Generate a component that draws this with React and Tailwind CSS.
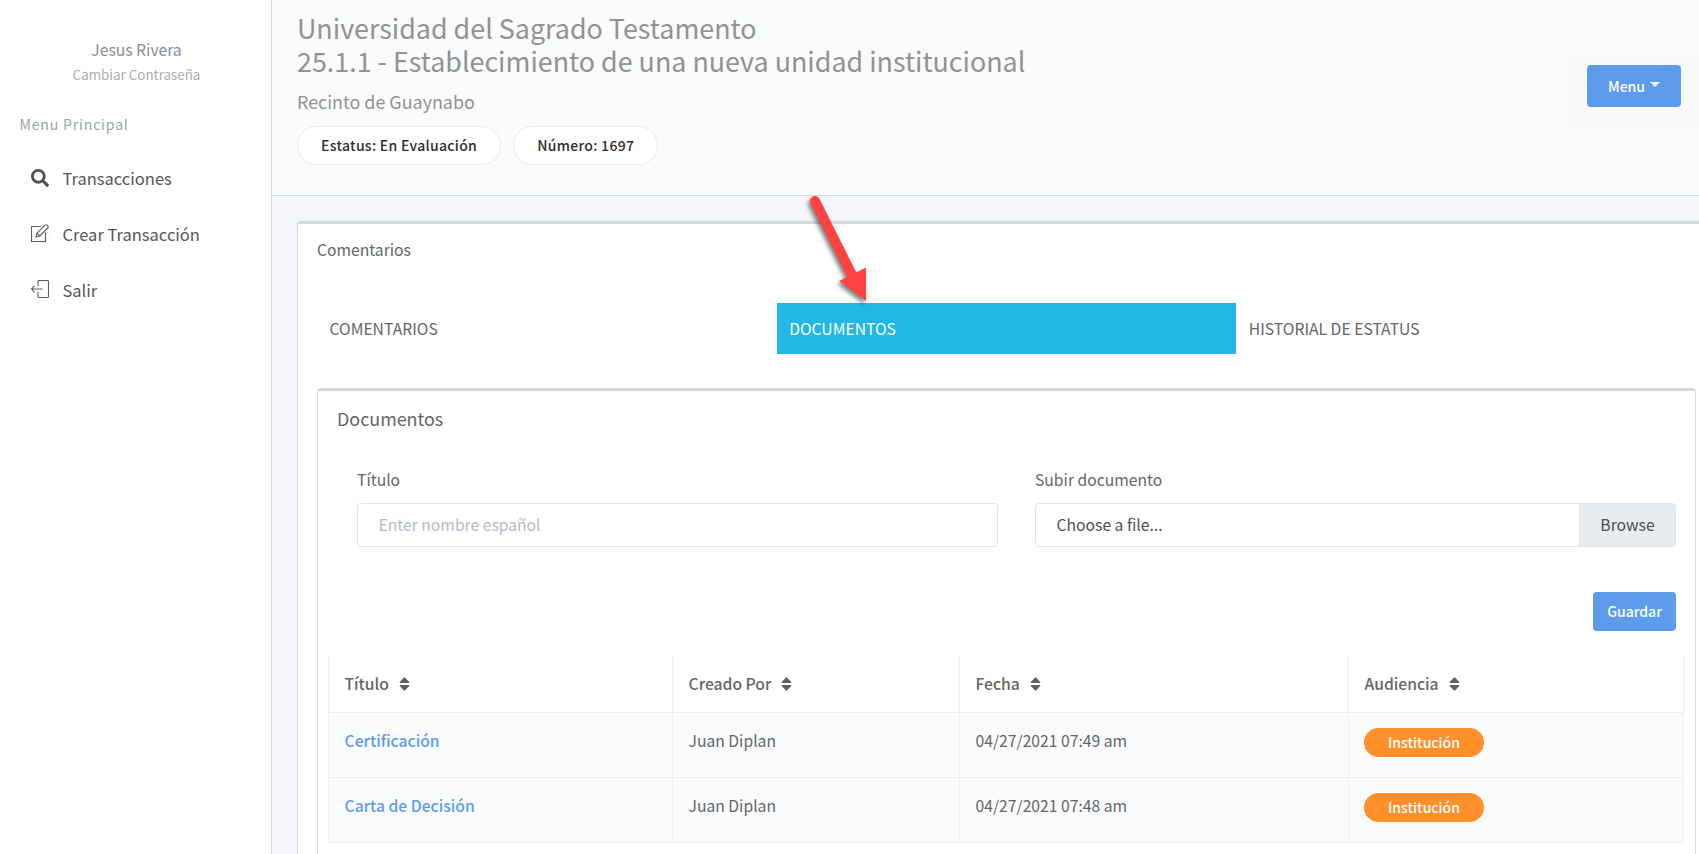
import { FaSearch } from 'react-icons/fa'

const documents = [
  { title: 'Certificación', author: 'Juan Diplan', date: '04/27/2021 07:49 am', audience: 'Institución' },
  { title: 'Carta de Decisión', author: 'Juan Diplan', date: '04/27/2021 07:48 am', audience: 'Institución' },
]

const columns = ['Título', 'Creado Por', 'Fecha', 'Audiencia']

function EditIcon() {
  return (
    <svg className="w-[20px] h-[20px]" viewBox="0 0 20 20" fill="none" stroke="#5c5c5c" strokeWidth="1.1" strokeLinejoin="round">
      <path d="M11 2.5H1.5v15h14V8.5" />
      <path d="M6 13l1-3.8L15 1.2q1.2-1 2.5.2t.3 2.6L9.8 12z" />
      <path d="M7 9.2L9.8 12" />
    </svg>
  )
}

function ExitIcon() {
  return (
    <svg className="w-[20px] h-[20px]" viewBox="0 0 20 20" fill="none" stroke="#5c5c5c" strokeWidth="1.1" strokeLinejoin="round">
      <path d="M8 6V1.5q0-1 1-1h8.500q1 0 1 1v15q0 1-1 1H9q-1 0-1-1V12" />
      <path d="M12.5 9H1.500M4.500 5.700L1.500 9l3 3.300" />
    </svg>
  )
}

function SortIcon() {
  return (
    <svg className="w-[11px] h-[14px] -mt-px" viewBox="0 0 11 14" fill="#616161">
      <path d="M5.5 0l4.800 5q.4.900-.6.900H1.300q-1 0-.6-.900z" />
      <path d="M5.5 14l4.800-5q.4-1-.6-1H1.300q-1 0-.6 1z" />
    </svg>
  )
}

function NavItem({ icon, label }) {
  return (
    <a className="flex items-center h-[56px] pl-[30px] text-[16.5px]">
      <span className="w-[32.5px]">{icon}</span>
      {label}
    </a>
  )
}

function Sidebar() {
  return (
    <aside className="w-[272px] shrink-0 bg-white border-r border-[#d2d9dd] text-[#565656]">
      <div className="pt-[38px] pl-[2px] text-center">
        <div className="text-[15.7px] leading-[24px] text-[#878c9b]">Jesus Rivera</div>
        <div className="text-[13.4px] leading-[24px] text-[#adadad]">Cambiar Contraseña</div>
      </div>
      <div className="mt-[26px] mb-[14px] pl-[19.5px] text-[14px] leading-6 tracking-[0.85px] text-[#98a6ad]">
        Menu Principal
      </div>
      <NavItem icon={<FaSearch className="ml-[1px]" size={18} color="#505050" />} label="Transacciones" />
      <NavItem icon={<EditIcon />} label="Crear Transacción" />
      <NavItem icon={<ExitIcon />} label="Salir" />
    </aside>
  )
}

function Pill({ children }) {
  return (
    <span className="h-[39px] px-[23px] flex items-center rounded-full border border-[#e8eaeb] bg-white text-[14px] font-medium tracking-[0.3px] text-[#2d2d2d]">
      {children}
    </span>
  )
}

function Header() {
  return (
    <header className="h-[196px] flex justify-between bg-[#fafbfd] border-b border-[#cfd9e0] pl-[25px]">
      <div className="pt-[11px] text-[#929292]">
        <h1 className="text-[26.87px] leading-[33px]">
          Universidad del Sagrado Testamento
          <br />
          25.1.1 - Establecimiento de una nueva unidad institucional
        </h1>
        <h2 className="mt-[12px] text-[17.9px] leading-[24px]">Recinto de Guaynabo</h2>
        <div className="mt-[13px] flex gap-[12px]">
          <Pill>Estatus: En Evaluación</Pill>
          <Pill>Número: 1697</Pill>
        </div>
      </div>
      <div className="mt-[53px] w-[138px] h-[76px] pt-[12px] pl-[26px] bg-[#fafafa]">
        <button className="w-[94px] h-[42px] flex items-center justify-center gap-[5px] rounded bg-[#5d9cec] text-[14px] font-medium text-white">
          Menu
          <span className="-mt-[3px] border-x-[5px] border-t-[5px] border-x-transparent border-t-white" />
        </button>
      </div>
    </header>
  )
}

function Arrow() {
  return (
    <svg className="absolute left-[800px] top-[190px] w-[80px] h-[125px] drop-shadow-[-2px_3px_2px_rgba(0,0,0,0.5)]" viewBox="800 190 80 125">
      <path d="M815 201L853 277" stroke="#ff4343" strokeWidth="10" strokeLinecap="round" />
      <path d="M866 267.5V301L839.3 281z" fill="#ff4343" />
    </svg>
  )
}

function Tabs() {
  return (
    <div className="grid grid-cols-3 h-[51px] text-[15.7px]">
      <div className="flex items-center pl-[12.5px]">COMENTARIOS</div>
      <div className="flex items-center pl-[12.5px] bg-[#23b7e5] text-white">DOCUMENTOS</div>
      <div className="flex items-center pl-[12.5px]">HISTORIAL DE ESTATUS</div>
    </div>
  )
}

function UploadForm() {
  return (
    <div className="mt-[38px] px-[19px]">
      <div className="flex justify-between pl-[20px]">
        <div className="w-[641px]">
          <label className="block h-[35px] text-[15.7px] leading-[24px]">Título</label>
          <div className="h-[44px] flex items-center rounded border border-[#dde6e9] px-[20.5px] pb-px text-[15.7px] text-[#b7bac9]">
            Enter nombre español
          </div>
        </div>
        <div className="w-[641px]">
          <label className="block h-[35px] text-[15.7px] leading-[24px]">Subir documento</label>
          <div className="h-[44px] flex items-stretch overflow-hidden rounded border border-[#dde6e9] text-[15.7px] text-[#495057]">
            <span className="flex-1 flex items-center px-[20.5px] pb-px">Choose a file...</span>
            <span className="w-[96px] flex items-center justify-center border-l border-[#dde6e9] bg-[#e9ecef] pb-px">Browse</span>
          </div>
        </div>
      </div>
      <button className="ml-auto mt-[45px] w-[83px] h-[39px] flex items-center justify-center rounded bg-[#5d9cec] text-[14px] font-medium text-white">
        Guardar
      </button>
    </div>
  )
}

function DocumentsTable() {
  return (
    <table className="mt-[25px] ml-[10px] w-[1356px] table-fixed border-collapse border-x border-b border-[#eee] text-[15.7px]">
      <colgroup>
        <col className="w-[344px]" />
        <col className="w-[287px]" />
        <col className="w-[389px]" />
        <col />
      </colgroup>
      <thead>
        <tr className="h-[56px]">
          {columns.map((name) => (
            <th key={name} className="border-x border-b border-[#eee] pl-[15.5px] pt-px text-left font-medium">
              <span className="flex items-center gap-[10px]">
                {name}
                <SortIcon />
              </span>
            </th>
          ))}
        </tr>
      </thead>
      <tbody>
        {documents.map((doc) => (
          <tr key={doc.title} className="h-[65px] bg-[#fafbfd] align-top">
            <td className="border border-[#eee] pl-[15.5px] pt-[16px] leading-[24px] font-medium text-[#5d9cec]">{doc.title}</td>
            <td className="border border-[#eee] pl-[15.5px] pt-[16px] leading-[24px]">{doc.author}</td>
            <td className="border border-[#eee] pl-[15.5px] pt-[16px] leading-[24px]">{doc.date}</td>
            <td className="border border-[#eee] pl-[15px] pt-[15px]">
              <span className="w-[120px] h-[29px] flex items-center justify-center rounded-full bg-[#ff902b] text-[14px] font-medium text-white">
                {doc.audience}
              </span>
            </td>
          </tr>
        ))}
      </tbody>
    </table>
  )
}

export default function App() {
  return (
    <div className="relative flex w-screen h-screen overflow-hidden bg-[#f5f7fa] text-[#656565] font-['Noto_Sans_CJK_SC','Source_Sans_Pro',sans-serif]">
      <Sidebar />
      <main className="flex-1 min-w-0">
        <Header />
        <section className="mt-[25px] ml-[25px] w-[1419px] h-[700px] rounded border border-t-[3px] border-[#cfdbe2] bg-white px-[19px]">
          <div className="pt-[14px] h-[79px] text-[15.7px] leading-[24px]">Comentarios</div>
          <Tabs />
          <div className="mt-[34px] w-[1379px] h-[600px] rounded border border-t-[3px] border-[#cfdbe2]">
            <div className="pl-[19px] pt-[15px] text-[17.9px] leading-[24px]">Documentos</div>
            <UploadForm />
            <DocumentsTable />
          </div>
        </section>
      </main>
      <Arrow />
    </div>
  )
}
